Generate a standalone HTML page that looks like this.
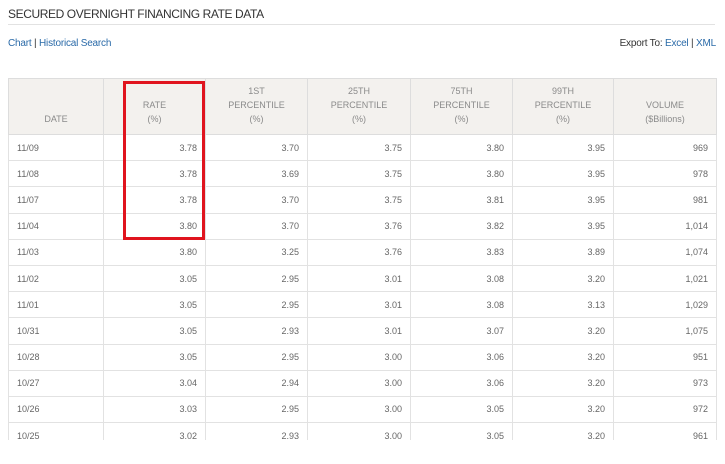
<!DOCTYPE html>
<html><head><style>
body{margin:0;background:#fff;width:725px;height:464px;overflow:hidden;font-family:"Liberation Sans Narrow","Liberation Sans",sans-serif;position:relative}
.t{position:absolute;left:8px;top:7px;font-size:12px;color:#333;letter-spacing:-0.4px}
.hr{position:absolute;left:8px;top:24px;width:707px;height:1px;background:#e2e2e2}
.l{position:absolute;top:38px;font-size:10px;color:#2a6aa8;letter-spacing:-0.2px}
.l span{color:#333}
table{position:absolute;left:8px;top:78px;border-collapse:collapse;width:708px;table-layout:fixed;font-size:9px;color:#666}
th{background:#f3f1ee;font-weight:normal;color:#8a8a8a;height:47px;border:1px solid #ddd;vertical-align:bottom;padding:0 0 8px 0;line-height:14px}
td{height:25.2px;border:1px solid #e2e2e2;text-align:right;padding:0 8px;color:#666}
td:first-child{text-align:left;padding-left:8px}
.red{position:absolute;left:123px;top:81px;width:76px;height:153px;border:3.5px solid #e0141e}
</style></head><body>
<div class="t">SECURED OVERNIGHT FINANCING RATE DATA</div>
<div class="hr"></div>
<div class="l" style="left:8px">Chart <span>|</span> Historical Search</div>
<div class="l" style="right:9px"><span>Export To:</span> Excel <span>|</span> XML</div>
<table>
<colgroup><col style="width:95px"><col style="width:102px"><col style="width:102px"><col style="width:103px"><col style="width:102px"><col style="width:101px"><col style="width:103px"></colgroup>
<tr><th>DATE</th><th>RATE<br>(%)</th><th>1ST<br>PERCENTILE<br>(%)</th><th>25TH<br>PERCENTILE<br>(%)</th><th>75TH<br>PERCENTILE<br>(%)</th><th>99TH<br>PERCENTILE<br>(%)</th><th>VOLUME<br>($Billions)</th></tr>
<tr><td>11/09</td><td>3.78</td><td>3.70</td><td>3.75</td><td>3.80</td><td>3.95</td><td>969</td></tr>
<tr><td>11/08</td><td>3.78</td><td>3.69</td><td>3.75</td><td>3.80</td><td>3.95</td><td>978</td></tr>
<tr><td>11/07</td><td>3.78</td><td>3.70</td><td>3.75</td><td>3.81</td><td>3.95</td><td>981</td></tr>
<tr><td>11/04</td><td>3.80</td><td>3.70</td><td>3.76</td><td>3.82</td><td>3.95</td><td>1,014</td></tr>
<tr><td>11/03</td><td>3.80</td><td>3.25</td><td>3.76</td><td>3.83</td><td>3.89</td><td>1,074</td></tr>
<tr><td>11/02</td><td>3.05</td><td>2.95</td><td>3.01</td><td>3.08</td><td>3.20</td><td>1,021</td></tr>
<tr><td>11/01</td><td>3.05</td><td>2.95</td><td>3.01</td><td>3.08</td><td>3.13</td><td>1,029</td></tr>
<tr><td>10/31</td><td>3.05</td><td>2.93</td><td>3.01</td><td>3.07</td><td>3.20</td><td>1,075</td></tr>
<tr><td>10/28</td><td>3.05</td><td>2.95</td><td>3.00</td><td>3.06</td><td>3.20</td><td>951</td></tr>
<tr><td>10/27</td><td>3.04</td><td>2.94</td><td>3.00</td><td>3.06</td><td>3.20</td><td>973</td></tr>
<tr><td>10/26</td><td>3.03</td><td>2.95</td><td>3.00</td><td>3.05</td><td>3.20</td><td>972</td></tr>
<tr><td>10/25</td><td>3.02</td><td>2.93</td><td>3.00</td><td>3.05</td><td>3.20</td><td>961</td></tr>
</table>
<div style="position:absolute;left:0;top:440px;width:725px;height:24px;background:#fff"></div>
<div class="red"></div>
</body></html>
